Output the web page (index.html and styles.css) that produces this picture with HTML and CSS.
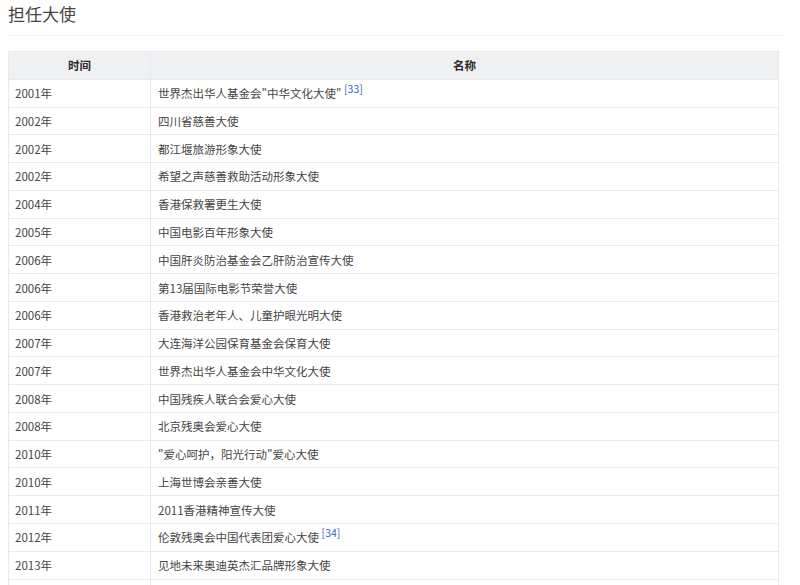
FILE: index.html
```html
<!DOCTYPE html>
<html lang="zh">
<head>
<meta charset="utf-8">
<title>担任大使</title>
<link rel="stylesheet" href="styles.css">
</head>
<body>
<h2 class="title">担任大使</h2>
<table class="wikitable">
<thead>
<tr><th class="col-time">时间</th><th>名称</th></tr>
</thead>
<tbody>
<tr><td>2001年</td><td>世界杰出华人基金会"中华文化大使" <sup class="ref">[33]</sup></td></tr>
<tr><td>2002年</td><td>四川省慈善大使</td></tr>
<tr><td>2002年</td><td>都江堰旅游形象大使</td></tr>
<tr><td>2002年</td><td>希望之声慈善救助活动形象大使</td></tr>
<tr><td>2004年</td><td>香港保救署更生大使</td></tr>
<tr><td>2005年</td><td>中国电影百年形象大使</td></tr>
<tr><td>2006年</td><td>中国肝炎防治基金会乙肝防治宣传大使</td></tr>
<tr><td>2006年</td><td>第13届国际电影节荣誉大使</td></tr>
<tr><td>2006年</td><td>香港救治老年人、儿童护眼光明大使</td></tr>
<tr><td>2007年</td><td>大连海洋公园保育基金会保育大使</td></tr>
<tr><td>2007年</td><td>世界杰出华人基金会中华文化大使</td></tr>
<tr><td>2008年</td><td>中国残疾人联合会爱心大使</td></tr>
<tr><td>2008年</td><td>北京残奥会爱心大使</td></tr>
<tr><td>2010年</td><td>"爱心呵护，阳光行动"爱心大使</td></tr>
<tr><td>2010年</td><td>上海世博会亲善大使</td></tr>
<tr><td>2011年</td><td>2011香港精神宣传大使</td></tr>
<tr><td>2012年</td><td>伦敦残奥会中国代表团爱心大使 <sup class="ref">[34]</sup></td></tr>
<tr><td>2013年</td><td>见地未来奥迪英杰汇品牌形象大使</td></tr>
<tr><td>&nbsp;</td><td>&nbsp;</td></tr>
</tbody>
</table>
</body>
</html>
```

FILE: styles.css
```css
html, body {
  background: #ffffff;
}
body {
  margin: 0 18px 0 8px;
  font-family: "Noto Sans CJK SC", "Noto Sans", sans-serif;
  color: #404040;
}
.title {
  margin: 0;
  font-size: 17px;
  font-weight: normal;
  line-height: 28px;
  padding-bottom: 7px;
  color: #444444;
  border-bottom: 1px solid #f0f1f3;
}
.wikitable {
  margin-top: 15px;
  width: 771px;
  border-collapse: collapse;
  font-size: 11.5px;
  table-layout: fixed;
}
.wikitable th,
.wikitable td {
  border: 1px solid #e8e9ec;
  height: 26.78px;
  padding: 0 6px;
  line-height: 16px;
  text-align: left;
  vertical-align: middle;
  color: #454545;
}
.wikitable th {
  background: #eff0f2;
  font-weight: bold;
  text-align: center;
  color: #2a2a2a;
}
.wikitable .col-time {
  width: 129px;
}
.wikitable td:nth-child(2) {
  padding-left: 7px;
}
.ref {
  color: #3366cc;
  font-size: 10.5px;
  vertical-align: 5px;
  line-height: 0;
}
```
